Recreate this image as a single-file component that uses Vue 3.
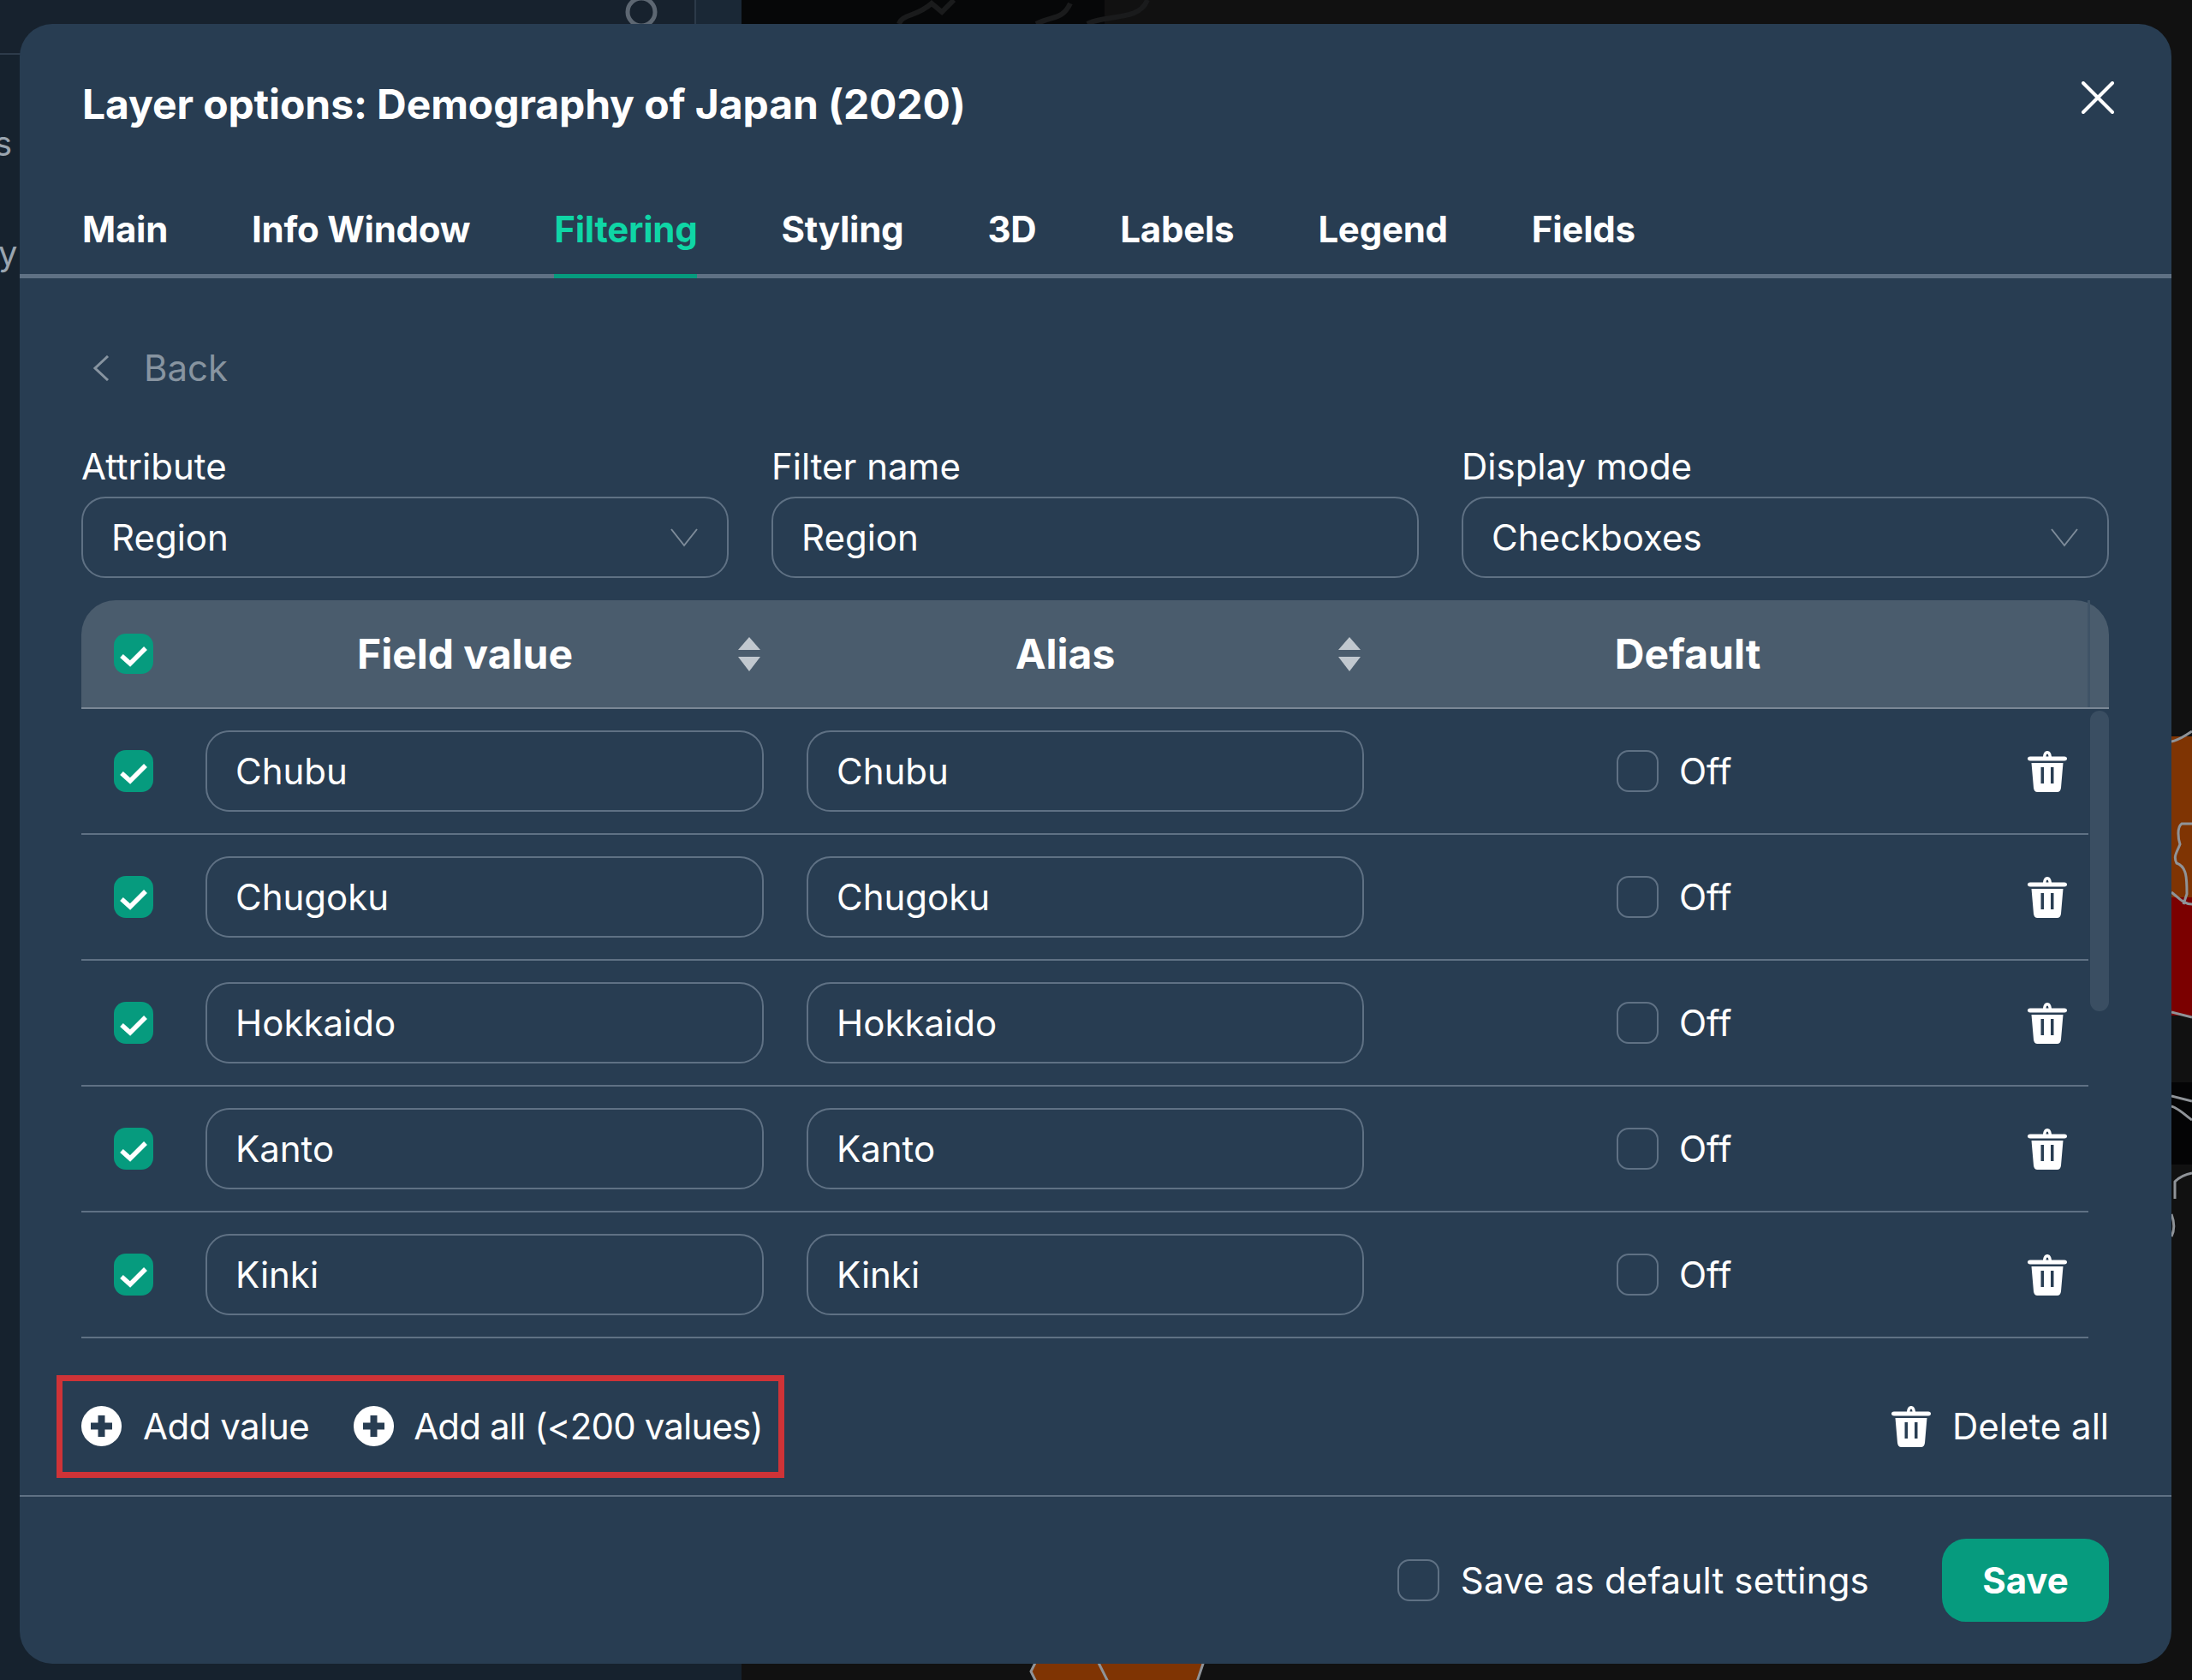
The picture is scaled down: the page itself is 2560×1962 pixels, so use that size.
<script setup>
const tabs = ['Main', 'Info Window', 'Filtering', 'Styling', '3D', 'Labels', 'Legend', 'Fields']
const rows = ['Chubu', 'Chugoku', 'Hokkaido', 'Kanto', 'Kinki']
const fields = [
  { label: 'Attribute', value: 'Region', select: true },
  { label: 'Filter name', value: 'Region', select: false },
  { label: 'Display mode', value: 'Checkboxes', select: true },
]
const trashPath = 'M18 7.500C18.500 3 20.500 1 23 1s4.500 2 5 6.500H43c2 0 3 1 3 2.500s-1 2.500-3 2.500H3c-2 0-3-1-3-2.500S1 7.500 3 7.500ZM21.500 7.500h3C24.300 5.500 23.800 4.500 23 4.500s-1.300 1-1.500 3ZM4.500 15h37L39 44c-.2 3-2 5-4.500 5h-23C9 49 7.200 47 7 44ZM15.500 20v19h3.500V20ZM27 20v19h3.500V20Z'
const plusPath = 'M23.500 0a23.500 23.500 0 1 0 0 47a23.500 23.500 0 1 0 0-47ZM19.500 11h8v8.500H36v8h-8.500V36h-8v-8.500H11v-8h8.500Z'
</script>

<template>
  <div class="page">
    <div class="side-top"></div>
    <div class="side-bottom"></div>
    <div class="side-gutter"></div>
    <div class="map"></div>
    <div class="map-orange"></div>
    <div class="map-red"></div>
    <div class="map-black"></div>
    <svg class="map-bottom" width="220" height="24" viewBox="0 0 220 24">
      <path d="M12 0H208L200 24H12L6 12Z" fill="#7f3403" />
      <path d="M12 0L6 12L12 24M84 0L96 24M208 0L200 24" fill="none" stroke="#8f9398" stroke-width="3" />
    </svg>
    <span class="side-text side-s">s</span>
    <span class="side-text side-y">y</span>
    <svg class="search" width="44" height="28" viewBox="0 0 44 28"><circle cx="20" cy="14" r="16" fill="none" stroke="#5d6772" stroke-width="5" /></svg>
    <svg class="map-lines" width="520" height="28" viewBox="0 0 520 28"><path d="M10 28C14 16 30 20 48 4L60 14L74 0M170 28C190 18 200 24 210 4M230 28C250 16 290 26 300 0" fill="none" stroke="#1a1b1c" stroke-width="6" /></svg>
    <svg class="map-edge" width="24" height="640" viewBox="0 0 24 640" fill="none" stroke="#8f9398" stroke-width="3">
      <path d="M0 16C10 14 18 8 24 4M24 112H12C6 116 8 130 10 136C6 146 2 150 6 158C18 162 18 176 18 194L14 206M0 192C8 198 14 206 24 206M0 332C8 334 16 336 24 338M0 430C8 432 16 434 24 436M0 442C8 444 18 454 24 458M24 520C14 522 8 526 4 530V550M0 568C3 576 4 586 0 594" />
    </svg>

    <section class="modal">
      <header class="title-row">
        <h1 class="title">Layer options: Demography of Japan (2020)</h1>
        <svg class="close" width="38" height="38" viewBox="0 0 38 38"><path d="M2 2L36 36M36 2L2 36" stroke="#fff" stroke-width="4" stroke-linecap="round" /></svg>
      </header>

      <nav class="tabs">
        <div v-for="tab in tabs" :key="tab" class="tab" :class="{ active: tab === 'Filtering' }">{{ tab }}</div>
      </nav>

      <div class="content">
        <div class="back">
          <svg width="20" height="30" viewBox="0 0 20 30"><path d="M18 1L3 15L18 29" fill="none" stroke="#8794a0" stroke-width="3" /></svg>
          <span>Back</span>
        </div>

        <div class="fields">
          <div v-for="field in fields" :key="field.label" class="field">
            <label class="field-label">{{ field.label }}</label>
            <div class="input input-top">
              <span>{{ field.value }}</span>
              <svg v-if="field.select" class="chevron" width="32" height="22" viewBox="0 0 32 22"><path d="M1 1L16 20L31 1" fill="none" stroke="#7d8b99" stroke-width="2" /></svg>
            </div>
          </div>
        </div>

        <div class="table">
          <div class="thead">
            <div class="check-cell">
              <svg class="check" width="46" height="47" viewBox="0 0 46 47"><rect width="46" height="47" rx="14" fill="#069b7e" /><path d="M9 26L19 35L37 17" fill="none" stroke="#fff" stroke-width="5.500" /></svg>
            </div>
            <div class="th th-field">Field value</div>
            <svg class="sort" width="26" height="40" viewBox="0 0 26 40"><path d="M13 0L26 15H0ZM0 23H26L13 40Z" fill="#c1c8cf" /></svg>
            <div class="th th-alias">Alias</div>
            <svg class="sort sort-alias" width="26" height="40" viewBox="0 0 26 40"><path d="M13 0L26 15H0ZM0 23H26L13 40Z" fill="#c1c8cf" /></svg>
            <div class="th th-default">Default</div>
          </div>

          <div class="tbody">
            <div class="rows">
              <div v-for="row in rows" :key="row" class="row">
                <div class="check-cell">
                  <svg class="check" width="46" height="49" viewBox="0 0 46 49"><rect width="46" height="49" rx="14" fill="#069b7e" /><path d="M9 27L19 36L37 18" fill="none" stroke="#fff" stroke-width="5.500" /></svg>
                </div>
                <div class="input input-field">{{ row }}</div>
                <div class="input input-alias">{{ row }}</div>
                <div class="box box-off"></div>
                <span class="off">Off</span>
                <svg class="trash" width="46" height="49" viewBox="0 0 46 49"><path :d="trashPath" fill="#fff" fill-rule="evenodd" /></svg>
              </div>
            </div>
            <div class="scroll"><div class="thumb"></div></div>
          </div>
        </div>

        <div class="actions">
          <div class="add-box">
            <div class="action add-value">
              <svg width="47" height="47" viewBox="0 0 47 47"><path :d="plusPath" fill="#fff" fill-rule="evenodd" /></svg>
              <span>Add value</span>
            </div>
            <div class="action add-all">
              <svg width="47" height="47" viewBox="0 0 47 47"><path :d="plusPath" fill="#fff" fill-rule="evenodd" /></svg>
              <span>Add all (&lt;200 values)</span>
            </div>
          </div>
          <div class="action">
            <svg width="46" height="49" viewBox="0 0 46 49"><path :d="trashPath" fill="#fff" fill-rule="evenodd" /></svg>
            <span>Delete all</span>
          </div>
        </div>
      </div>

      <footer class="footer">
        <div class="box"></div>
        <span class="save-label">Save as default settings</span>
        <button class="save">Save</button>
      </footer>
    </section>
  </div>
</template>

<style>
html, body { margin: 0; background: #111; }
</style>

<style scoped>
.page {
  position: relative;
  width: 2560px;
  height: 1962px;
  overflow: hidden;
  background: #111;
  font-family: Inter, "Liberation Sans", sans-serif;
  color: #fff;
}
.side-top { position: absolute; left: 0; top: 0; width: 811px; height: 62px; background: #17222e; border-bottom: 2px solid #2d3b4a; }
.side-bottom { position: absolute; left: 0; top: 64px; width: 866px; height: 1898px; background: #16222e; }
.side-gutter { position: absolute; left: 811px; top: 0; width: 55px; height: 64px; background: #1a2836; border-left: 2px solid #2c3a49; box-sizing: border-box; }
.map { position: absolute; left: 866px; top: 0; width: 424px; height: 40px; background: #060708; }
.map-orange { position: absolute; left: 2536px; top: 860px; width: 24px; height: 190px; background: #7f3403; }
.map-red { position: absolute; left: 2536px; top: 1048px; width: 24px; height: 138px; background: #7b0000; }
.map-black { position: absolute; left: 2536px; top: 1264px; width: 24px; height: 96px; background: #040405; }
.map-bottom { position: absolute; left: 1198px; top: 1940px; }
.side-text { position: absolute; font-size: 40px; color: #9aa5b0; line-height: 48px; }
.side-s { left: -7px; top: 144px; }
.side-y { left: -2px; top: 272px; }
.search { position: absolute; left: 729px; top: 0; }
.map-lines { position: absolute; left: 1040px; top: 0; }
.map-edge { position: absolute; left: 2536px; top: 850px; }

.modal {
  position: absolute;
  left: 23px;
  top: 28px;
  width: 2513px;
  height: 1915px;
  background: #283d52;
  border-radius: 38px;
  display: flex;
  flex-direction: column;
}
.title-row {
  height: 188px;
  flex: none;
  box-sizing: border-box;
  display: flex;
  align-items: center;
  justify-content: space-between;
  padding: 0 67px 0 73px;
}
.title { margin: 0; font-size: 48px; line-height: 56px; font-weight: 700; letter-spacing: -0.1px; }
.close { margin-top: -17px; }
.tabs {
  flex: none;
  display: flex;
  gap: 98px;
  padding: 0 73px;
  height: 109px;
  box-sizing: border-box;
  border-bottom: 5px solid #5f7184;
}
.tab {
  font-size: 42px;
  line-height: 52px;
  font-weight: 700;
  padding-top: 26px;
  height: 109px;
  box-sizing: border-box;
  letter-spacing: -0.25px;
}
.tab.active { color: #0fd6a6; border-bottom: 5px solid #069b7e; }

.content {
  flex: 1;
  min-height: 0;
  padding: 0 73px 0 72px;
  border-bottom: 2px solid #5f7184;
}
.back {
  height: 195px;
  box-sizing: border-box;
  padding: 77px 0 0 13px;
  display: flex;
  align-items: flex-start;
  gap: 40px;
  font-size: 42px;
  line-height: 56px;
  color: #8794a0;
}
.back svg { margin-top: 13px; }
.fields { display: flex; gap: 50px; }
.field { width: 756px; }
.field-label { display: block; font-size: 42px; line-height: 50px; height: 60px; }
.input {
  box-sizing: border-box;
  border: 2px solid #5f7184;
  border-radius: 28px;
  font-size: 42px;
  padding: 0 33px;
  display: flex;
  align-items: center;
  justify-content: space-between;
}
.input-top { height: 95px; }
.chevron { margin-right: 1px; }

.table { margin-top: 26px; }
.thead {
  position: relative;
  height: 127px;
  box-sizing: border-box;
  background: #4a5c6d;
  border-radius: 40px 40px 0 0;
  border-bottom: 2px solid #7a8896;
  display: flex;
  align-items: center;
}
.thead::after {
  content: "";
  position: absolute;
  left: 2343px;
  top: 0;
  width: 3px;
  height: 125px;
  background: #3f5366;
}
.check-cell { width: 145px; flex: none; box-sizing: border-box; padding-left: 38px; display: flex; }
.th { font-size: 48px; font-weight: 700; text-align: center; }
.th-field { width: 606px; }
.sort { margin-left: 16px; }
.th-alias { width: 604px; margin-left: 54px; }
.sort-alias { margin-left: 17px; }
.th-default { width: 300px; margin-left: 232px; }

.tbody { display: flex; }
.rows { width: 2344px; flex: none; }
.row {
  height: 147px;
  box-sizing: border-box;
  border-bottom: 2px solid #5f7184;
  display: flex;
  align-items: center;
  padding-right: 25px;
}
.input-field { width: 652px; height: 95px; }
.input-alias { width: 651px; height: 95px; margin-left: 50px; }
.box {
  width: 49px;
  height: 49px;
  flex: none;
  box-sizing: border-box;
  border: 2px solid #5f7184;
  border-radius: 14px;
}
.box-off { margin-left: 295px; }
.off { font-size: 42px; margin-left: 24px; }
.trash { margin-left: auto; }
.scroll { width: 22px; margin-left: 2px; padding-top: 2px; }
.thumb { height: 351px; background: #3a4e62; border-radius: 11px; }

.actions {
  height: 183px;
  box-sizing: border-box;
  padding-top: 22px;
  display: flex;
  align-items: center;
  justify-content: space-between;
}
.add-box {
  display: flex;
  gap: 52px;
  align-items: center;
  box-sizing: border-box;
  height: 120px;
  margin-left: -29px;
  padding: 0 18px 0 22px;
  border: 7px solid #cf3337;
}
.action { display: flex; align-items: center; gap: 25px; font-size: 42px; }
.add-value { letter-spacing: -0.5px; }
.add-all { gap: 23px; letter-spacing: -0.85px; }

.footer {
  height: 195px;
  flex: none;
  box-sizing: border-box;
  display: flex;
  align-items: center;
  padding: 0 73px 0 0;
  justify-content: flex-end;
}
.save-label { font-size: 42px; margin-left: 25px; letter-spacing: 0.2px; }
.save {
  width: 195px;
  height: 97px;
  margin-left: 85px;
  background: #069b7e;
  border: none;
  border-radius: 28px;
  color: #fff;
  font-family: inherit;
  font-size: 42px;
  font-weight: 700;
}
</style>
